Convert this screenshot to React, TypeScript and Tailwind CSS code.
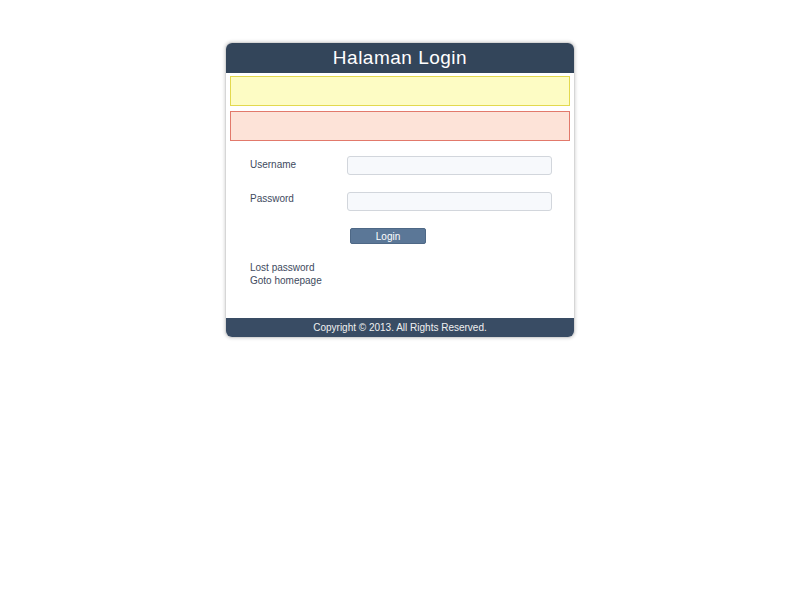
import React from "react";

export default function App() {
  return (
    <div className="min-h-[600px] w-full bg-white pt-[42px]" style={{ fontFamily: '"Liberation Sans", Arial, sans-serif' }}>
      <div className="mx-auto w-[350px] rounded-[7px] border border-[#d6d6d6] bg-white shadow-[0_0_3px_1px_rgba(0,0,0,0.12)]">
        <div className="flex h-[30px] items-center justify-center rounded-t-[6px] bg-[#33455a] text-[19px] tracking-[0.5px] text-white">
          Halaman Login
        </div>
        <div className="px-[4px] pt-[3px]">
          <div className="h-[30px] border border-[#e3d94e] bg-[#fdfcc4]" />
          <div className="mt-[5px] h-[30px] border border-[#e2796b] bg-[#fde3d8]" />
        </div>
        <div className="pl-[24px] pr-[20px] pt-[15px] text-[10px] text-[#3e4a5e]">
          <div className="flex items-center">
            <div className="w-[97px] pb-[2px]">Username</div>
            <input className="h-[19px] w-[205px] rounded-[3px] border border-[#d2d6dc] bg-[#f7f9fc] outline-none" />
          </div>
          <div className="mt-[16px] flex items-center">
            <div className="w-[97px] pb-[6px]">Password</div>
            <input type="password" className="h-[19px] w-[205px] rounded-[3px] border border-[#d2d6dc] bg-[#f7f9fc] outline-none" />
          </div>
          <div className="mt-[16px] pl-[100px]">
            <button className="flex h-[16px] w-[76px] items-center justify-center rounded-[2px] border border-[#4e6886] bg-[#5b7797] text-[10px] text-white">
              Login
            </button>
          </div>
          <div className="mt-[17px] leading-[13px]">
            <div>Lost password</div>
            <div>Goto homepage</div>
          </div>
        </div>
        <div className="mt-[31px] flex h-[19px] items-center justify-center rounded-b-[6px] bg-[#394c64] text-[10px] text-[#f0f0f0]">
          Copyright © 2013. All Rights Reserved.
        </div>
      </div>
    </div>
  );
}
